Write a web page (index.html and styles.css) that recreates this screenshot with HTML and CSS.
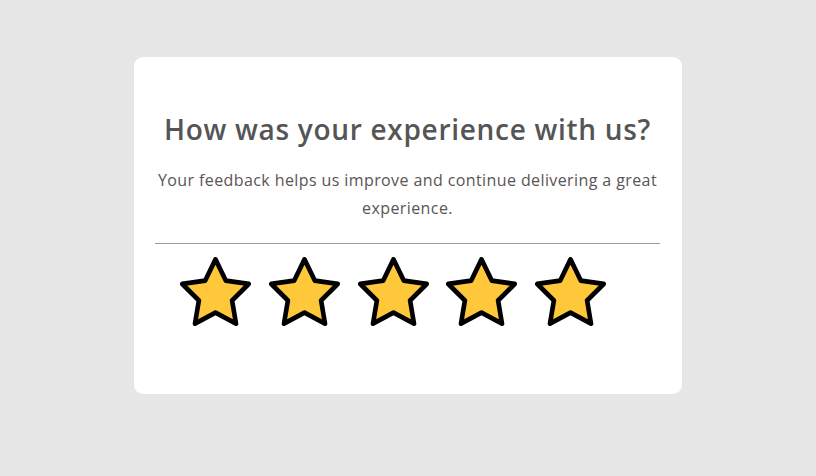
FILE: index.html
```html
<!DOCTYPE html>
<html lang="en">
<head>
<meta charset="utf-8">
<title>Feedback</title>
<link rel="stylesheet" href="styles.css">
</head>
<body>
<main class="page">
  <section class="card">
    <h1 class="title">How was your experience with us?</h1>
    <p class="desc">Your feedback helps us improve and continue delivering a great experience.</p>
    <hr class="divider">
    <div class="stars">
      <svg class="star" viewBox="1.3 1.3 21.4 20.4" preserveAspectRatio="none" aria-hidden="true"><polygon points="12 2 15.09 8.26 22 9.27 17 14.14 18.18 21.02 12 17.77 5.82 21.02 7 14.14 2 9.27 8.91 8.26 12 2"/></svg>
      <svg class="star" viewBox="1.3 1.3 21.4 20.4" preserveAspectRatio="none" aria-hidden="true"><polygon points="12 2 15.09 8.26 22 9.27 17 14.14 18.18 21.02 12 17.77 5.82 21.02 7 14.14 2 9.27 8.91 8.26 12 2"/></svg>
      <svg class="star" viewBox="1.3 1.3 21.4 20.4" preserveAspectRatio="none" aria-hidden="true"><polygon points="12 2 15.09 8.26 22 9.27 17 14.14 18.18 21.02 12 17.77 5.82 21.02 7 14.14 2 9.27 8.91 8.26 12 2"/></svg>
      <svg class="star" viewBox="1.3 1.3 21.4 20.4" preserveAspectRatio="none" aria-hidden="true"><polygon points="12 2 15.09 8.26 22 9.27 17 14.14 18.18 21.02 12 17.77 5.82 21.02 7 14.14 2 9.27 8.91 8.26 12 2"/></svg>
      <svg class="star" viewBox="1.3 1.3 21.4 20.4" preserveAspectRatio="none" aria-hidden="true"><polygon points="12 2 15.09 8.26 22 9.27 17 14.14 18.18 21.02 12 17.77 5.82 21.02 7 14.14 2 9.27 8.91 8.26 12 2"/></svg>
    </div>
  </section>
</main>
</body>
</html>
```

FILE: styles.css
```css
html, body {
  margin: 0;
  padding: 0;
}

body {
  background: #e6e6e6;
  font-family: "Open Sans", "DejaVu Sans", sans-serif;
  color: #555;
}

.page {
  display: flex;
  justify-content: center;
  padding-top: 57px;
}

.card {
  box-sizing: border-box;
  width: 548px;
  height: 337px;
  background: #fff;
  border-radius: 9px;
  padding: 54px 22px 0 21px;
  text-align: center;
}

.title {
  margin: 0;
  font-size: 28px;
  font-weight: 600;
  line-height: 36px;
  letter-spacing: 0.7px;
  color: #555;
}

.desc {
  margin: 19px 0 0;
  font-size: 16px;
  line-height: 28px;
  letter-spacing: 0.4px;
  color: #5a5454;
}

.divider {
  margin: 21px 0 0;
  border: 0;
  height: 1px;
  background: #9a9a9a;
}

.stars {
  display: flex;
  gap: 17.75px;
  padding-left: 25px;
  margin-top: 13px;
}

.star {
  width: 71px;
  height: 69px;
  fill: #ffc83a;
  stroke: #000;
  stroke-width: 1.4;
  stroke-linejoin: round;
}
```
